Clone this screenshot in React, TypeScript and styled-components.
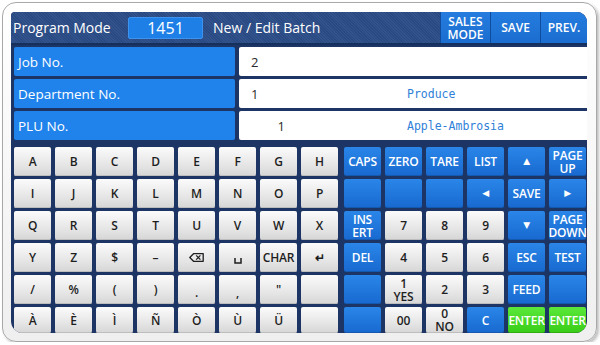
import styled, { createGlobalStyle } from 'styled-components';
import type { ReactNode } from 'react';

const GlobalStyle = createGlobalStyle`
  html, body {
    margin: 0;
    padding: 0;
    background: #ffffff;
  }
  body {
    font-family: 'Open Sans', 'Liberation Sans', sans-serif;
  }
`;

const Frame = styled.div`
  margin: 2px 0 0 2px;
  width: 595px;
  height: 340px;
  box-sizing: border-box;
  padding: 9px 9px 8px 8px;
  border: 1px solid #a8a8a8;
  border-radius: 14px;
  background: linear-gradient(#ffffff, #efefef);
  box-shadow: 2px 2px 3px rgba(0, 0, 0, 0.25);
`;

const Panel = styled.div`
  width: 576px;
  height: 321px;
  background: #1d3565;
  border-radius: 4px 10px 12px 12px;
  overflow: hidden;
  display: flex;
  flex-direction: column;
`;

const Header = styled.div`
  height: 33px;
  flex-shrink: 0;
  display: flex;
  align-items: flex-start;
  background-color: #2b4c87;
  background-image: repeating-linear-gradient(
    45deg,
    rgba(255, 255, 255, 0.04) 0 1px,
    rgba(0, 0, 0, 0.04) 1px 2px
  );
  border-bottom: 2px solid #16305e;
  box-sizing: border-box;
`;

const HeaderLeft = styled.div`
  flex: 1;
  height: 31px;
  display: flex;
  align-items: center;
  padding-left: 2px;
  color: #ffffff;
`;

const ModeTitle = styled.span`
  font-size: 14px;
  width: 115px;
`;

const BatchNo = styled.div`
  width: 75px;
  height: 22px;
  box-sizing: border-box;
  background: #1e7fe7;
  border: 1px solid #3d93ee;
  border-radius: 2px;
  display: flex;
  align-items: center;
  justify-content: center;
  font-size: 16px;
  margin-right: 10px;
`;

const BatchTitle = styled.span`
  font-size: 14px;
`;

const HeaderButton = styled.div<{ $last?: boolean }>`
  width: ${({ $last }) => ($last ? '47px' : '50px')};
  height: 31px;
  box-sizing: border-box;
  background: linear-gradient(#257ddf, #1b6dcf);
  border-left: 1px solid #0f4c9e;
  border-top-right-radius: ${({ $last }) => ($last ? '8px' : '0')};
  display: flex;
  align-items: center;
  justify-content: center;
  text-align: center;
  color: #ffffff;
  font-size: 12px;
  font-weight: 600;
  line-height: 13px;
`;

const Fields = styled.div`
  display: flex;
  flex-direction: column;
  gap: 3px;
  padding: 2px 0 0 3px;
`;

const FieldRow = styled.div`
  display: flex;
  gap: 4px;
  height: 29px;
`;

const FieldLabel = styled.div`
  width: 221px;
  background: #1f83eb;
  border-radius: 2px;
  color: #ffffff;
  font-size: 13.5px;
  display: flex;
  align-items: center;
  padding-left: 4px;
  box-sizing: border-box;
`;

const FieldValue = styled.div`
  flex: 1;
  background: #ffffff;
  border-radius: 2px 0 0 2px;
  display: flex;
  align-items: center;
  font-size: 13px;
  color: #2a2a2a;
`;

const NumberCell = styled.span<{ $align: 'left' | 'right' }>`
  width: ${({ $align }) => ($align === 'right' ? '46px' : '168px')};
  padding-left: ${({ $align }) => ($align === 'right' ? '0' : '12px')};
  box-sizing: border-box;
  text-align: ${({ $align }) => $align};
`;

const NameCell = styled.span<{ $offset: number }>`
  margin-left: ${({ $offset }) => $offset}px;
  font-family: 'DejaVu Sans Mono', 'Liberation Mono', monospace;
  font-size: 11.5px;
  color: #2f7fd8;
`;

const Keyboard = styled.div`
  display: flex;
  gap: 6px;
  padding: 7px 0 0 3px;
`;

const KeyGrid = styled.div<{ $cols: number }>`
  display: grid;
  grid-template-columns: repeat(${({ $cols }) => $cols}, 37px);
  grid-template-rows: repeat(5, 29px) 26px;
  column-gap: 4px;
  row-gap: 3px;
`;

type Variant = 'white' | 'blue' | 'green';

const Key = styled.div<{ $variant: Variant }>`
  border-radius: 2px;
  display: flex;
  align-items: center;
  justify-content: center;
  text-align: center;
  font-size: 12px;
  line-height: 13px;
  letter-spacing: -0.2px;
  font-weight: 600;
  color: ${({ $variant }) => ($variant === 'white' ? '#1e1e1e' : '#ffffff')};
  background: ${({ $variant }) =>
    $variant === 'white'
      ? 'linear-gradient(#fbfbfb, #e6e6e6 60%, #d6d6d6)'
      : $variant === 'green'
        ? 'linear-gradient(#5be83a, #38cc17)'
        : 'linear-gradient(#2a86e8, #1869cf)'};
  box-shadow: ${({ $variant }) =>
    $variant === 'white' ? 'inset 0 -1px 0 #bdbdbd' : 'inset 0 -1px 0 rgba(0,0,0,0.15)'};
  white-space: nowrap;
`;

const Arrow = styled.span`
  font-family: 'DejaVu Sans', sans-serif;
  font-size: 9px;
`;

const LowMark = styled.span`
  display: inline-block;
  transform: translateY(3px);
`;

const BackspaceIcon = () => (
  <svg width="15" height="9" viewBox="0 0 15 9">
    <path d="M4.5 0.7 H14.2 V8.3 H4.5 L0.8 4.5 Z" fill="none" stroke="#1e1e1e" strokeWidth="1.3" strokeLinejoin="round" />
    <path d="M7.2 2.4 L11.4 6.6 M11.4 2.4 L7.2 6.6" stroke="#1e1e1e" strokeWidth="1.3" />
  </svg>
);

const SpaceIcon = () => (
  <svg width="8" height="6" viewBox="0 0 8 6" style={{ marginTop: 6 }}>
    <path d="M1 0 V5 H7 V0" fill="none" stroke="#1e1e1e" strokeWidth="1.5" />
  </svg>
);

type KeyDef = { label: ReactNode; variant: Variant };

const w = (label: ReactNode): KeyDef => ({ label, variant: 'white' });
const b = (label: ReactNode): KeyDef => ({ label, variant: 'blue' });
const g = (label: ReactNode): KeyDef => ({ label, variant: 'green' });

const twoLine = (a: string, c: string) => (
  <span>
    {a}
    <br />
    {c}
  </span>
);

const leftKeys: KeyDef[] = [
  ...'ABCDEFGH'.split('').map(w),
  ...'IJKLMNOP'.split('').map(w),
  ...'QRSTUVWX'.split('').map(w),
  w('Y'), w('Z'), w('$'), w('–'), w(<BackspaceIcon />), w(<SpaceIcon />), w('CHAR'), w('↵'),
  w('/'), w('%'), w('('), w(')'), w(<LowMark>.</LowMark>), w(<LowMark>,</LowMark>), w('"'), w(''),
  w('À'), w('È'), w('Ì'), w('Ñ'), w('Ò'), w('Ù'), w('Ü'), w(''),
];

const rightKeys: KeyDef[] = [
  b('CAPS'), b('ZERO'), b('TARE'), b('LIST'), b(<Arrow>▲</Arrow>), b(twoLine('PAGE', 'UP')),
  b(''), b(''), b(''), b(<Arrow>◀</Arrow>), b('SAVE'), b(<Arrow>▶</Arrow>),
  b(twoLine('INS', 'ERT')), w('7'), w('8'), w('9'), b(<Arrow>▼</Arrow>), b(twoLine('PAGE', 'DOWN')),
  b('DEL'), w('4'), w('5'), w('6'), b('ESC'), b('TEST'),
  b(''), w(twoLine('1', 'YES')), w('2'), w('3'), b('FEED'), b(''),
  b(''), w('00'), w(twoLine('0', 'NO')), b('C'), g('ENTER'), g('ENTER'),
];

export default function App() {
  return (
    <>
      <GlobalStyle />
      <Frame>
        <Panel>
          <Header>
            <HeaderLeft>
              <ModeTitle>Program Mode</ModeTitle>
              <BatchNo>1451</BatchNo>
              <BatchTitle>New / Edit Batch</BatchTitle>
            </HeaderLeft>
            <HeaderButton>{twoLine('SALES', 'MODE')}</HeaderButton>
            <HeaderButton>SAVE</HeaderButton>
            <HeaderButton $last>PREV.</HeaderButton>
          </Header>
          <Fields>
            <FieldRow>
              <FieldLabel>Job No.</FieldLabel>
              <FieldValue>
                <NumberCell $align="left">2</NumberCell>
              </FieldValue>
            </FieldRow>
            <FieldRow>
              <FieldLabel>Department No.</FieldLabel>
              <FieldValue>
                <NumberCell $align="left">1</NumberCell>
                <NameCell $offset={0}>Produce</NameCell>
              </FieldValue>
            </FieldRow>
            <FieldRow>
              <FieldLabel>PLU No.</FieldLabel>
              <FieldValue>
                <NumberCell $align="right">1</NumberCell>
                <NameCell $offset={122}>Apple-Ambrosia</NameCell>
              </FieldValue>
            </FieldRow>
          </Fields>
          <Keyboard>
            <KeyGrid $cols={8}>
              {leftKeys.map((k, i) => (
                <Key key={i} $variant={k.variant}>{k.label}</Key>
              ))}
            </KeyGrid>
            <KeyGrid $cols={6}>
              {rightKeys.map((k, i) => (
                <Key key={i} $variant={k.variant}>{k.label}</Key>
              ))}
            </KeyGrid>
          </Keyboard>
        </Panel>
      </Frame>
    </>
  );
}
